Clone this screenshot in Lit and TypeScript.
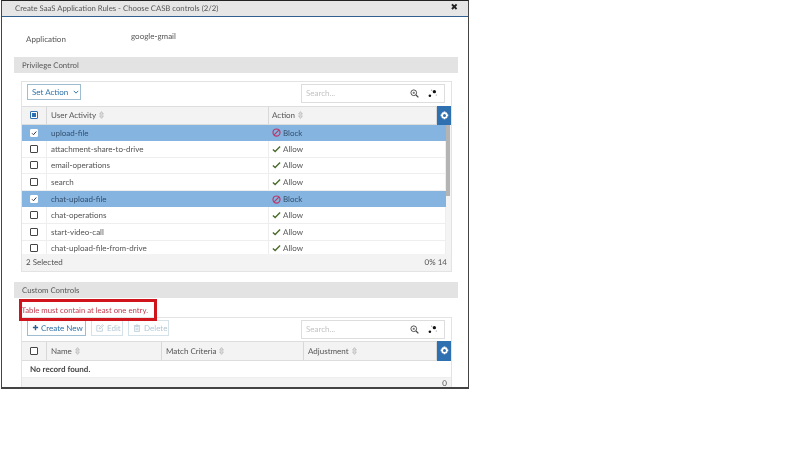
import { LitElement, html, css, svg } from "lit";
import { customElement } from "lit/decorators.js";

const rows = [
  ["upload-file", true],
  ["attachment-share-to-drive", false],
  ["email-operations", false],
  ["search", false],
  ["chat-upload-file", true],
  ["chat-operations", false],
  ["start-video-call", false],
  ["chat-upload-file-from-drive", false],
] as [string, boolean][];

const sort = html`<svg class="sort" viewBox="0 0 6 9" width="5" height="8"><path d="M3 .5 5.2 3.4H.8zM3 8.5.8 5.6h4.4z" fill="none" stroke="#999" stroke-width=".7"/></svg>`;
const gear = html`<svg viewBox="0 0 12 12" width="9" height="9"><path fill="#fff" fill-rule="evenodd" d="M4.9.5h2.2l.3 1.6 1-.5 1.6 1.6-.6 1 1.6.4v2.4l-1.6.4.6 1-1.6 1.6-1-.6-.3 1.6H4.9l-.4-1.6-1 .6-1.6-1.6.6-1L.9 7V4.6l1.6-.4-.6-1 1.6-1.6 1 .5zM6 4a2 2 0 1 0 0 4 2 2 0 0 0 0-4z"/></svg>`;
const search = html`<div class="search">
  <span>Search...</span>
  <svg viewBox="0 0 12 12" width="9" height="9"><circle cx="5" cy="5" r="3.8" fill="none" stroke="#444" stroke-width="1.2"/><circle cx="5" cy="5" r="1.5" fill="#777"/><path d="M8 8l3.2 3.2" stroke="#444" stroke-width="1.6"/></svg>
  <svg viewBox="0 0 12 12" width="9" height="9"><circle cx="2.5" cy="9" r="1.7" fill="#111"/><circle cx="8.5" cy="3.5" r="2.2" fill="#111"/><circle cx="11" cy="8" r=".7" fill="#777"/><circle cx="5" cy="1.5" r=".7" fill="#777"/></svg>
</div>`;
const check = svg`<path d="M1 5.5 3.8 8.2 10 1.8" fill="none" stroke="#4a6b2a" stroke-width="1.7"/>`;

@customElement("app-root")
export class AppRoot extends LitElement {
  static styles = css`
    :host { display: block; width: 809px; height: 455px; background: #fff; font-family: Lato, "Open Sans", sans-serif; font-size: 8px; text-rendering: geometricPrecision; color: #555; overflow: hidden; }
    * { box-sizing: border-box; }
    .dialog { width: 468px; height: 389px; margin-left: 1px; border: 1px solid #444; border-top: 1.5px solid #222; border-bottom: 2px solid #444; border-left-width: 1.5px; overflow: hidden; display: flex; flex-direction: column; filter: blur(.35px); }
    .title { height: 15.5px; flex: none; background: #e6e6e6; border-bottom: 1.5px solid #2f5f8f; display: flex; align-items: center; justify-content: space-between; padding: 0 10px 1px 13px; color: #555; font-size: 7.75px; }
    .close { font-family: "DejaVu Sans", sans-serif; font-size: 9px; font-weight: 700; color: #222; }
    .body { padding: 0 10px 0 12px; flex: 1; min-height: 0; }
    .app { height: 40px; display: grid; grid-template-columns: 105px 1fr; padding-left: 12px; }
    .app .lab { padding-top: 17px; }
    .app .val { padding-top: 14px; }
    .section { height: 16px; background: #e3e3e3; display: flex; align-items: center; padding-left: 8px; color: #555; font-size: 7.8px; }
    .table { margin: 8px 6px 0 7px; border: 1px solid #e3e3e3; }
    .toolbar { height: 24px; display: flex; align-items: flex-start; gap: 5px; padding: 2px 6px 0 5px; }
    .btn { height: 16px; border: 1px solid #9fbdd0; color: #2f72a8; padding-left: 4px; display: flex; align-items: center; gap: 3px; background: #fff; }
    .w-set { width: 54px; gap: 5px; }
    .w-new { width: 59px; gap: 2px; }
    .w-edit { width: 32px; }
    .w-del { width: 41px; }
    .btn.off { border-color: #d5e2ea; color: #b5c8d4; }
    .search { margin-left: auto; width: 144px; height: 19px; border: 1px solid #ddd; display: flex; align-items: center; padding: 0 7px 0 4px; gap: 9px; color: #c4c4c4; }
    .search span { flex: 1; }
    .head { height: 19px; display: grid; background: #f3f3f3; border-top: 1px solid #ddd; border-bottom: 1px solid #ddd; }
    .head > div { display: flex; align-items: center; padding-left: 4px; gap: 3px; border-right: 1px solid #d8d8d8; }
    .head > .cb, .row > .cb { justify-content: center; padding: 0; }
    .head > .g { background: #2f70b0; border: 0; justify-content: center; padding: 0; margin-top: -1px; margin-bottom: -1px; }
    .sel { grid-template-columns: 25px 222px 168px 1fr; }
    .sel > div:nth-child(3) { padding-left: 3px; }
    .cust { grid-template-columns: 25px 115px 142px 133px 1fr; height: 20px; }
    .scroll { display: flex; height: 129px; overflow: hidden; }
    .rows { flex: 1; }
    .bar { width: 5px; background: #f4f4f4; }
    .thumb { height: 71px; width: 4px; background: #b4b4b4; }
    .row { height: 16.6px; display: grid; grid-template-columns: 25px 222px 1fr; border-bottom: 1px solid #eee; }
    .row > div { display: flex; align-items: center; padding-left: 4px; gap: 2px; border-right: 1px solid #eee; }
    .row > div:last-child { padding-left: 3px; gap: 2px; }
    .row.on { background: #86b4e0; color: #34506e; border-bottom: 0; }
    .row.on > div { border-right-color: #86b4e0; }
    .box { width: 8px; height: 8px; border: 1.2px solid #444; background: #fff; border-radius: 1px; display: block; }
    .box.c { border-color: #fff; }
    .box.p { border-color: #2f70b0; padding: 1px; }
    .box.p::after { content: ""; display: block; width: 100%; height: 100%; background: #2f70b0; }
    .foot { height: 17px; background: #f3f3f3; display: flex; align-items: center; justify-content: space-between; padding: 0 4px; }
    .err { position: relative; z-index: 1; width: 138px; height: 22px; margin: 1px 0 0 4.5px; border: 3px solid #d0141c; color: #c0394b; display: flex; align-items: center; padding-left: 0; white-space: nowrap; font-size: 7.75px; }
    .t2 { margin-top: -4px; }
    .t2 .toolbar { height: 23px; }
    .norec { height: 17px; display: flex; align-items: center; padding-left: 8px; font-weight: 700; color: #444; border-bottom: 1px solid #eee; }
    .foot2 { height: 10px; background: #f3f3f3; text-align: right; padding: 0 4px; line-height: 10px; }
    .s2 { margin-top: 10px; }
  `;

  row(name: string, on: boolean) {
    return html`<div class="row ${on ? "on" : ""}">
      <div class="cb"><span class="box ${on ? "c" : ""}">${on ? html`<svg viewBox="0 0 12 12" width="6" height="6" style="display:block"><path d="M2 6.5 5 9.5 10.5 3" fill="none" stroke="#334" stroke-width="2"/></svg>` : ""}</span></div>
      <div>${name}</div>
      <div>
        ${on
          ? html`<svg viewBox="0 0 12 12" width="9" height="9"><circle cx="6" cy="6" r="4.7" fill="none" stroke="#b8386a" stroke-width="1.6"/><path d="M2.8 9.2 9.2 2.8" stroke="#b8386a" stroke-width="1.6"/></svg>Block`
          : html`<svg viewBox="0 0 11 10" width="9" height="8">${check}</svg>Allow`}
      </div>
    </div>`;
  }

  render() {
    return html`<div class="dialog">
      <div class="title"><span>Create SaaS Application Rules - Choose CASB controls (2/2)</span><span class="close">✖</span></div>
      <div class="body">
        <div class="app"><div class="lab">Application</div><div class="val">google-gmail</div></div>
        <div class="section">Privilege Control</div>
        <div class="table">
          <div class="toolbar">
            <div class="btn w-set">Set Action <svg viewBox="0 0 8 5" width="6" height="4"><path d="M1 1l3 3 3-3" fill="none" stroke="#2f72a8" stroke-width="1.3"/></svg></div>
            ${search}
          </div>
          <div class="head sel">
            <div class="cb"><span class="box p"></span></div>
            <div>User Activity ${sort}</div>
            <div>Action ${sort}</div>
            <div class="g">${gear}</div>
          </div>
          <div class="scroll">
            <div class="rows">${rows.map((r) => this.row(r[0], r[1]))}</div>
            <div class="bar"><div class="thumb"></div></div>
          </div>
          <div class="foot"><span>2 Selected</span><span>0% 14</span></div>
        </div>
        <div class="section s2">Custom Controls</div>
        <div class="err">Table must contain at least one entry.</div>
        <div class="table t2">
          <div class="toolbar">
            <div class="btn w-new"><svg viewBox="0 0 8 8" width="7" height="7"><path d="M4 1v6M1 4h6" stroke="#2f5f8f" stroke-width="1.6"/></svg>Create New</div>
            <div class="btn off w-edit"><svg viewBox="0 0 10 10" width="8" height="8"><path d="M8 5.5V9H1V2h4M4 6l.4-1.6L8.3 1 9.5 2 5.6 5.7z" fill="none" stroke="#b5c8d4"/></svg>Edit</div>
            <div class="btn off w-del"><svg viewBox="0 0 10 10" width="8" height="8"><path d="M2 3h6v6.5H2zM1 2h8M4 1h2M4 4.5v3.5M6 4.5v3.5" fill="none" stroke="#b5c8d4"/></svg>Delete</div>
            ${search}
          </div>
          <div class="head cust">
            <div class="cb"><span class="box"></span></div>
            <div>Name ${sort}</div>
            <div>Match Criteria ${sort}</div>
            <div>Adjustment ${sort}</div>
            <div class="g">${gear}</div>
          </div>
          <div class="norec">No record found.</div>
          <div class="foot2">0</div>
        </div>
      </div>
    </div>`;
  }
}
